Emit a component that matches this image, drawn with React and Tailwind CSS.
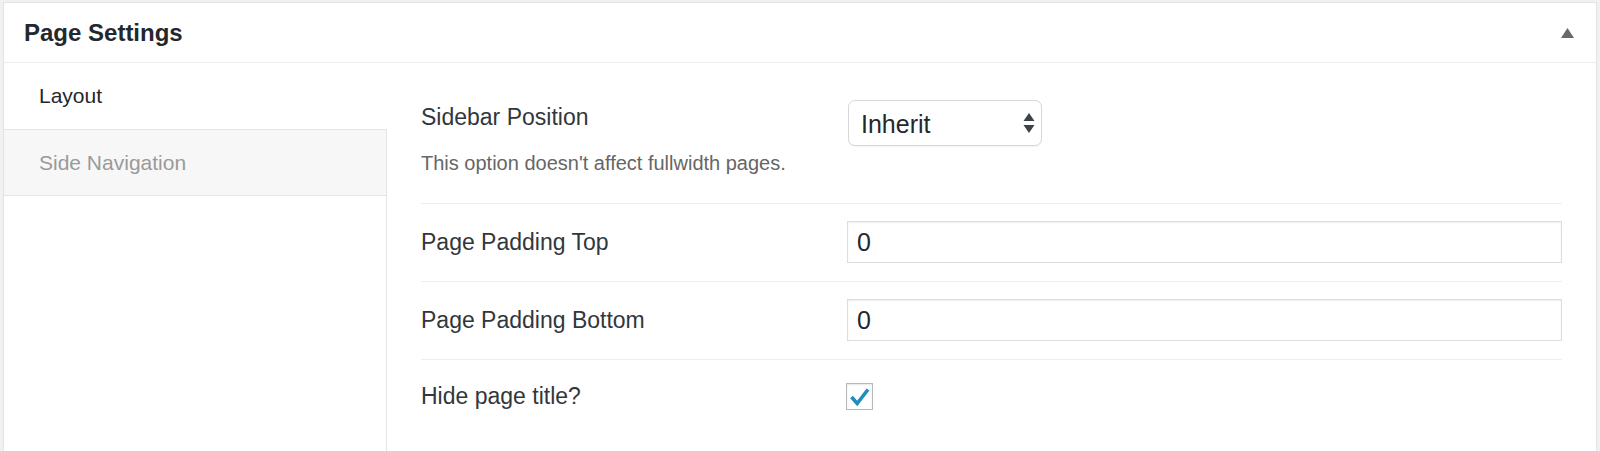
import React, { useState } from 'react';

function Triangle() {
  return (
    <svg width="13" height="10" viewBox="0 0 13 10" className="block">
      <polygon points="6.5,0 13,10 0,10" fill="#646970" />
    </svg>
  );
}

function SelectArrows() {
  return (
    <svg width="12" height="20" viewBox="0 0 12 20" className="block">
      <polygon points="6,0 11.5,8 0.5,8" fill="#3c434a" />
      <polygon points="0.5,12 11.5,12 6,20" fill="#3c434a" />
    </svg>
  );
}

function Check() {
  return (
    <svg width="25" height="25" viewBox="0 0 25 25" className="block">
      <polyline
        points="4.5,13 10.2,19.5 21,5.5"
        fill="none"
        stroke="#1e8cbe"
        strokeWidth="3.6"
        strokeLinejoin="miter"
      />
    </svg>
  );
}

const tabs = ['Layout', 'Side Navigation'];

export default function App() {
  const [active, setActive] = useState(0);
  const [hideTitle, setHideTitle] = useState(true);

  return (
    <div className="min-h-[451px] bg-[#f1f1f1] pt-[2px] px-[3px] font-['Liberation_Sans',Arial,sans-serif]">
      <div className="border border-[#e2e4e7] bg-white shadow-[0_1px_1px_rgba(0,0,0,0.04)]">
        {/* Header */}
        <div className="h-[60px] flex items-center justify-between pl-[20px] pr-[22px] border-b border-[#eeeeee]">
          <h2 className="text-[24px] font-bold text-[#23282d] leading-none">Page Settings</h2>
          <Triangle />
        </div>

        <div className="flex">
          {/* Tabs */}
          <div className="w-[383px] flex flex-col">
            {tabs.map((tab, i) =>
              i === active ? (
                <button
                  key={tab}
                  onClick={() => setActive(i)}
                  className="h-[66px] bg-white text-left pl-[35px] text-[21px] text-[#23282d] last:h-[67px] last:border-y last:border-[#e5e5e5]"
                >
                  {tab}
                </button>
              ) : (
                <button
                  key={tab}
                  onClick={() => setActive(i)}
                  className="h-[67px] bg-[#f7f7f7] text-left pl-[35px] text-[21px] text-[#9a9a9a] border-y border-r border-[#e5e5e5]"
                >
                  {tab}
                </button>
              )
            )}
            <div className="flex-1 border-r border-[#e5e5e5]" />
          </div>

          {/* Fields */}
          <div className="flex-1 pl-[34px] pr-[34px] pt-[19px] pb-[20px] text-[#32373c]">
            <div className="flex items-start pt-[18px] pb-[26px] border-b border-[#eeeeee]">
              <div className="w-[426px]">
                <div className="text-[23px] leading-[34px]">Sidebar Position</div>
                <p className="mt-[15px] text-[20px] leading-[28px] text-[#666666]">
                  This option doesn't affect fullwidth pages.
                </p>
              </div>
              <div className="relative w-[194px] h-[46px] ml-[1px]">
                <select
                  defaultValue="inherit"
                  className="appearance-none w-full h-full rounded-[7px] border border-[#d7d7d7] bg-white pl-[12px] pr-[30px] pt-[3px] text-[25px] text-[#23282d] shadow-[0_1px_1px_rgba(0,0,0,0.05)] outline-none font-['Liberation_Sans',Arial,sans-serif]"
                >
                  <option value="inherit">Inherit</option>
                  <option value="left">Left</option>
                  <option value="right">Right</option>
                  <option value="none">None</option>
                </select>
                <span className="absolute right-[7px] top-[13px] pointer-events-none">
                  <SelectArrows />
                </span>
              </div>
            </div>

            <div className="flex items-center pt-[17px] pb-[18px] border-b border-[#eeeeee]">
              <div className="w-[426px] text-[23px]">Page Padding Top</div>
              <input
                defaultValue="0"
                className="flex-1 h-[42px] border border-[#dddddd] pl-[9px] text-[25px] text-[#23282d] shadow-[inset_0_1px_2px_rgba(0,0,0,0.07)] outline-none font-['Liberation_Sans',Arial,sans-serif]"
              />
            </div>

            <div className="flex items-center pt-[17px] pb-[18px] border-b border-[#eeeeee]">
              <div className="w-[426px] text-[23px]">Page Padding Bottom</div>
              <input
                defaultValue="0"
                className="flex-1 h-[42px] border border-[#dddddd] pl-[9px] text-[25px] text-[#23282d] shadow-[inset_0_1px_2px_rgba(0,0,0,0.07)] outline-none font-['Liberation_Sans',Arial,sans-serif]"
              />
            </div>

            <div className="flex items-center pt-[19px] pb-[19px]">
              <div className="w-[425px] text-[23px]">Hide page title?</div>
              <button
                onClick={() => setHideTitle(!hideTitle)}
                className="w-[27px] h-[27px] border border-[#b4b9be] bg-white flex items-center justify-center shadow-[inset_0_1px_2px_rgba(0,0,0,0.1)]"
              >
                {hideTitle && <Check />}
              </button>
            </div>
          </div>
        </div>
      </div>
    </div>
  );
}
